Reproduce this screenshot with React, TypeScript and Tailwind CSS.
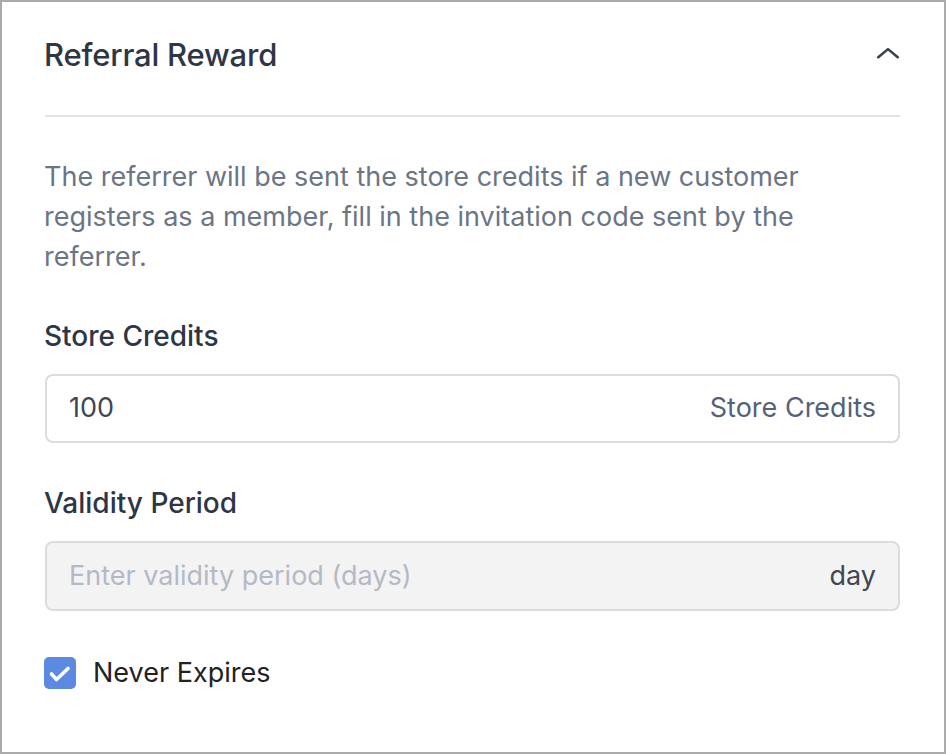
import React from "react";

export default function App() {
  return (
    <div className="w-[946px] h-[754px] bg-white border-2 border-[#aaaaaa] box-border" style={{ fontFamily: "Inter, 'Noto Sans', sans-serif" }}>
      <div className="pl-[42px] pr-[44px]">
        <div className="flex items-center justify-between h-[113px]">
          <h1 className="text-[31px] font-medium text-[#2e3645] tracking-[-0.2px] mt-[-6px]">Referral Reward</h1>
          <svg width="26" height="26" viewBox="0 0 24 24" fill="none" stroke="#3a4150" strokeWidth="2.4" strokeLinecap="round" strokeLinejoin="round" className="mr-[-1px] mb-[10px]">
            <path d="M3 15l9-7.5 9 7.5" />
          </svg>
        </div>
        <div className="h-[2px] bg-[#dde3ea] ml-[1px]" />
        <p className="mt-[40px] text-[27px] leading-[40px] text-[#6b7585] max-w-[775px]">
          The referrer will be sent the store credits if a new customer registers as a member, fill in the invitation code sent by the referrer.
        </p>
        <div className="mt-[42px] text-[28px] leading-[34px] font-medium text-[#2e3645]">Store Credits</div>
        <div className="mt-[21px] ml-[1px] h-[69px] rounded-[8px] border-2 border-[#dcdcdc] flex items-center justify-between pl-[22px] pr-[22px] text-[27px]">
          <span className="text-[#3f4654]">100</span>
          <span className="text-[#556179]">Store Credits</span>
        </div>
        <div className="mt-[43px] text-[28px] leading-[34px] font-medium text-[#2e3645]">Validity Period</div>
        <div className="mt-[21px] ml-[1px] h-[70px] rounded-[8px] border-2 border-[#dcdcdc] bg-[#f3f3f3] flex items-center justify-between pl-[22px] pr-[22px] text-[27px]">
          <span className="text-[#b3bac6]">Enter validity period (days)</span>
          <span className="text-[#3f4654]">day</span>
        </div>
        <div className="mt-[42px] flex items-center gap-[17px]">
          <div className="w-[32px] h-[32px] rounded-[5px] bg-[#5b8ae0]">
            <svg width="32" height="32" viewBox="0 0 32 32" fill="none" stroke="white" strokeWidth="3.6" strokeLinecap="round" strokeLinejoin="round">
              <path d="M7.5 17l5 5.5 11.5-11" />
            </svg>
          </div>
          <span className="text-[27px] text-[#222222]">Never Expires</span>
        </div>
      </div>
    </div>
  );
}
